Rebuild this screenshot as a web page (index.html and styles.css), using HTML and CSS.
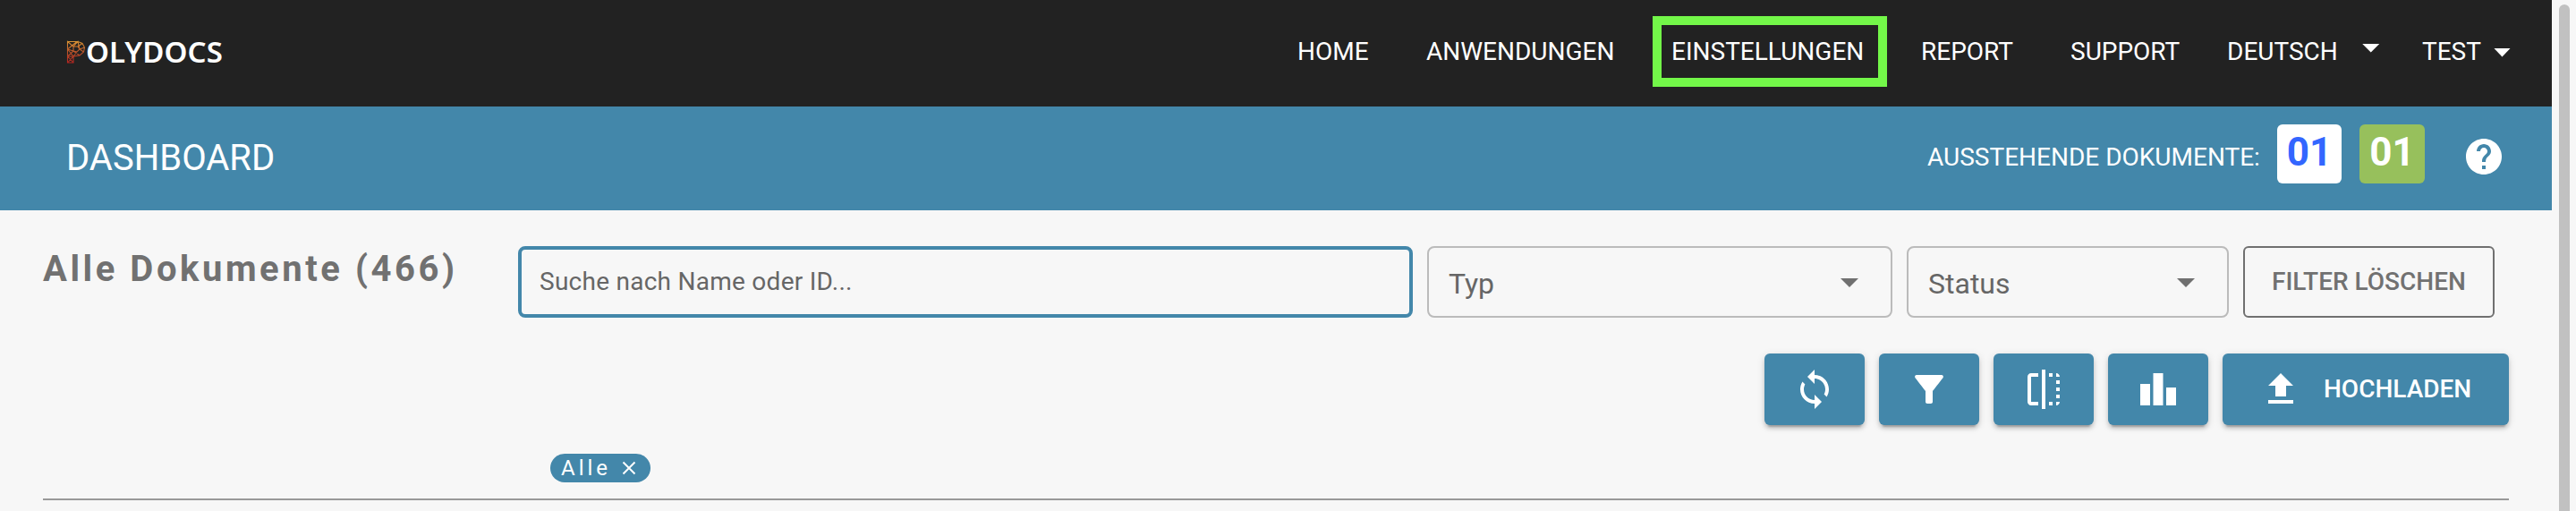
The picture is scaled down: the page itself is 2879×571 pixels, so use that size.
FILE: index.html
```html
<!DOCTYPE html>
<html lang="de">
<head>
<meta charset="utf-8">
<title>Polydocs</title>
<link rel="stylesheet" href="styles.css">
</head>
<body>
<div class="app">
  <header class="topbar">
    <div class="logo">
      <svg class="logo-mark" viewBox="0 0 22 26">
        <defs><linearGradient id="mesh" x1="0" y1="0" x2="0" y2="26" gradientUnits="userSpaceOnUse"><stop offset="0" stop-color="#dc9a35"/><stop offset=".5" stop-color="#b9532a"/><stop offset="1" stop-color="#b3211f"/></linearGradient></defs>
        <path d="M1 1.500H13L18 3.500 20.500 8 19.500 13 15 17 8 18V25H1.500V1.500L8 7H13L15 10 12 13 8 12V7L13 1.500 15 10 20.500 8M1.500 10 12 1.500M1.500 10 8 18 1.500 25M1.500 18 8 12 15 17M1.500 18 8 25M8 12 1.500 10M13 7 18 3.500M15 10 19.500 13M1.500 18 8 18 12 13" fill="none" stroke="url(#mesh)" stroke-width="1.100"/>
      </svg>
      <span class="logo-text">OLYDOCS</span>
    </div>
    <nav class="nav">
      <a class="home">HOME</a>
      <a class="anw">ANWENDUNGEN</a>
      <a class="active"><span>EINSTELLUNGEN</span></a>
      <a class="report">REPORT</a>
      <a class="support">SUPPORT</a>
      <a class="lang">DEUTSCH<i class="caret raised"></i></a>
      <a class="user">TEST<i class="caret"></i></a>
    </nav>
  </header>
  <section class="titlebar">
    <h1>DASHBOARD</h1>
    <div class="pending">
      <span class="pending-label">AUSSTEHENDE DOKUMENTE:</span>
      <span class="badge white">01</span>
      <span class="badge green">01</span>
      <svg class="icon" viewBox="0 0 24 24"><path d="M12 2C6.480 2 2 6.480 2 12s4.480 10 10 10 10-4.480 10-10S17.520 2 12 2zm1 17h-2v-2h2v2zm2.070-7.750l-.9.920C13.450 12.900 13 13.500 13 15h-2v-.5c0-1.100.450-2.100 1.170-2.830l1.240-1.260c.370-.360.590-.860.590-1.410 0-1.100-.9-2-2-2s-2 .9-2 2H8c0-2.210 1.790-4 4-4s4 1.790 4 4c0 .880-.360 1.680-.930 2.250z"/></svg>
    </div>
  </section>
  <main class="content">
    <div class="filters">
      <h2>Alle Dokumente (466)</h2>
      <div class="search">Suche nach Name oder ID...</div>
      <div class="select type"><span>Typ</span><i class="caret"></i></div>
      <div class="select status"><span>Status</span><i class="caret"></i></div>
      <div class="clear"><span>FILTER LÖSCHEN</span></div>
    </div>
    <div class="actions">
      <div class="btn"><svg class="icon" viewBox="0 0 24 24"><path d="M12 4V1L8 5l4 4V6c3.310 0 6 2.690 6 6 0 1.010-.250 1.970-.7 2.800l1.460 1.460C19.540 15.030 20 13.570 20 12c0-4.420-3.580-8-8-8zm0 14c-3.310 0-6-2.690-6-6 0-1.010.250-1.970.7-2.800L5.240 7.740C4.460 8.970 4 10.430 4 12c0 4.420 3.580 8 8 8v3l4-4-4-4v3z"/></svg></div>
      <div class="btn"><svg class="icon" viewBox="0 0 24 24"><path d="M4.250 5.610C6.270 8.200 10 13 10 13v6c0 .550.450 1 1 1h2c.550 0 1-.450 1-1v-6s3.720-4.800 5.740-7.390c.510-.660.040-1.610-.790-1.610H5.040c-.830 0-1.300.950-.790 1.610z"/></svg></div>
      <div class="btn"><svg class="icon" viewBox="0 0 24 24"><path d="M15 21h2v-2h-2v2zm4-12h2V7h-2v2zM3 5v14c0 1.100.9 2 2 2h4v-2H5V5h4V3H5c-1.100 0-2 .9-2 2zm16-2v2h2c0-1.100-.9-2-2-2zm-8 20h2V1h-2v22zm8-6h2v-2h-2v2zM15 5h2V3h-2v2zm4 8h2v-2h-2v2zm0 8c1.100 0 2-.9 2-2h-2v2z"/></svg></div>
      <div class="btn"><svg class="icon" viewBox="0 0 24 24"><path d="M7.500 21H2V9h5.500v12zm7.250-18h-5.500v18h5.500V3zM22 11h-5.500v10H22V11z"/></svg></div>
      <div class="btn upload"><svg class="icon" viewBox="0 0 24 24"><path d="M9 16h6v-6h4l-7-7-7 7h4zm-4 2h14v2H5z"/></svg><span>HOCHLADEN</span></div>
    </div>
    <div class="chips">
      <div class="chip"><span>Alle</span><svg class="close" viewBox="0 0 16 16"><path d="M1.500 1.500l13 13M14.500 1.500l-13 13"/></svg></div>
    </div>
  </main>
</div>
<div class="scrollbar"><div class="thumb"></div></div>
</body>
</html>
```
FILE: styles.css
```css
* { box-sizing: border-box; }
body {
  margin: 0;
  display: flex;
  height: 571px;
  overflow: hidden;
  background: #f7f7f7;
  font-family: Roboto, "Liberation Sans", sans-serif;
  font-size: 28px;
  line-height: 32px;
  white-space: nowrap;
}
.app { width: 2852px; }
.scrollbar { flex: 1; padding: 5px 7px 0 8px; }
.thumb { height: 566px; border-radius: 6px 6px 0 0; background: #c1c1c1; }

.topbar {
  height: 119px;
  background: #222;
  color: #fff;
  display: flex;
  justify-content: space-between;
  padding: 18px 46px 0 74px;
}
.logo { display: flex; height: 79px; align-items: center; }
.logo-mark { width: 22px; height: 26px; }
.logo-text {
  font: 600 33px/40px "Noto Sans", sans-serif;
  letter-spacing: 0.1px;
}
.nav {
  display: grid;
  grid-template-columns: 144px 253px 300px 167px 175px 218px 99px;
  width: 1356px;
  align-items: center;
  height: 79px;
}
.nav a { display: flex; align-items: center; }
.nav .active {
  width: 262px;
  height: 79px;
  border: 10px solid #73f749;
  padding-left: 11px;
}
.caret {
  width: 20px;
  height: 10px;
  background: currentColor;
  clip-path: polygon(0 0, 100% 0, 50% 100%);
}
.nav .caret { margin: 2px 0 0 14px; }
.nav .raised { margin: 0 0 8px 27px; }

.titlebar {
  height: 116px;
  background: #4387aa;
  color: #fff;
  display: flex;
  justify-content: space-between;
  padding: 0 52px 0 74px;
}
h1 { margin: 34px 0 0; font-size: 40px; line-height: 48px; font-weight: 400; }
.pending { display: flex; width: 646px; padding-top: 20px; }
.pending-label { width: 391px; padding-top: 21px; }
.badge {
  width: 72px;
  height: 66px;
  border-radius: 6px;
  font-size: 44px;
  line-height: 63px;
  font-weight: 700;
  text-align: center;
  margin-right: 20px;
}
.white { background: #fff; color: #3366ff; }
.green { width: 73px; background: #97c05c; margin-right: 42px; }
.icon { width: 48px; height: 48px; fill: #fff; flex: none; }
.pending .icon { margin-top: 12px; }

.content {
  width: 2756px;
  height: 324px;
  margin-left: 48px;
  padding-top: 40px;
  border-bottom: 2px solid #999;
}
.filters { display: flex; gap: 16px; color: #666; }
h2 {
  margin: 2px 0 0;
  width: 515px;
  font-size: 40px;
  line-height: 48px;
  font-weight: 700;
  letter-spacing: 3.55px;
  color: #717171;
}
.search {
  width: 1000px;
  height: 80px;
  border: 4px solid #4387aa;
  border-radius: 8px;
  padding: 20px;
  letter-spacing: 0.26px;
}
.select {
  height: 80px;
  border: 2px solid #bbb;
  border-radius: 8px;
  display: flex;
  justify-content: space-between;
  padding: 21px 36px 0 22px;
  font-size: 32px;
  line-height: 38px;
}
.select .caret { background: #707070; margin-top: 13px; }
.type { width: 520px; }
.status { width: 360px; }
.clear {
  width: 281px;
  height: 80px;
  border: 2px solid #707070;
  border-radius: 6px;
  padding: 22px 0 0 30px;
  font-weight: 500;
  color: #717171;
}
.actions { display: flex; justify-content: flex-end; gap: 16px; margin-top: 40px; }
.btn {
  width: 112px;
  height: 80px;
  border-radius: 6px;
  background: #4387aa;
  color: #fff;
  display: flex;
  align-items: center;
  justify-content: center;
  font-weight: 500;
  box-shadow: 0 6px 2px -4px rgba(0,0,0,.2), 0 4px 4px rgba(0,0,0,.14), 0 2px 10px rgba(0,0,0,.12);
}
.upload { width: 320px; justify-content: flex-start; padding-left: 41px; gap: 24px; }
.chips { padding: 32px 0 0 567px; }
.chip {
  width: 112px;
  height: 32px;
  border-radius: 16px;
  background: #4387aa;
  color: #fff;
  display: flex;
  align-items: center;
  padding-left: 12px;
  font-size: 24px;
  letter-spacing: 4px;
}
.close { width: 16px; height: 16px; margin-left: 12px; fill: none; stroke: #fff; stroke-width: 2; }
```
